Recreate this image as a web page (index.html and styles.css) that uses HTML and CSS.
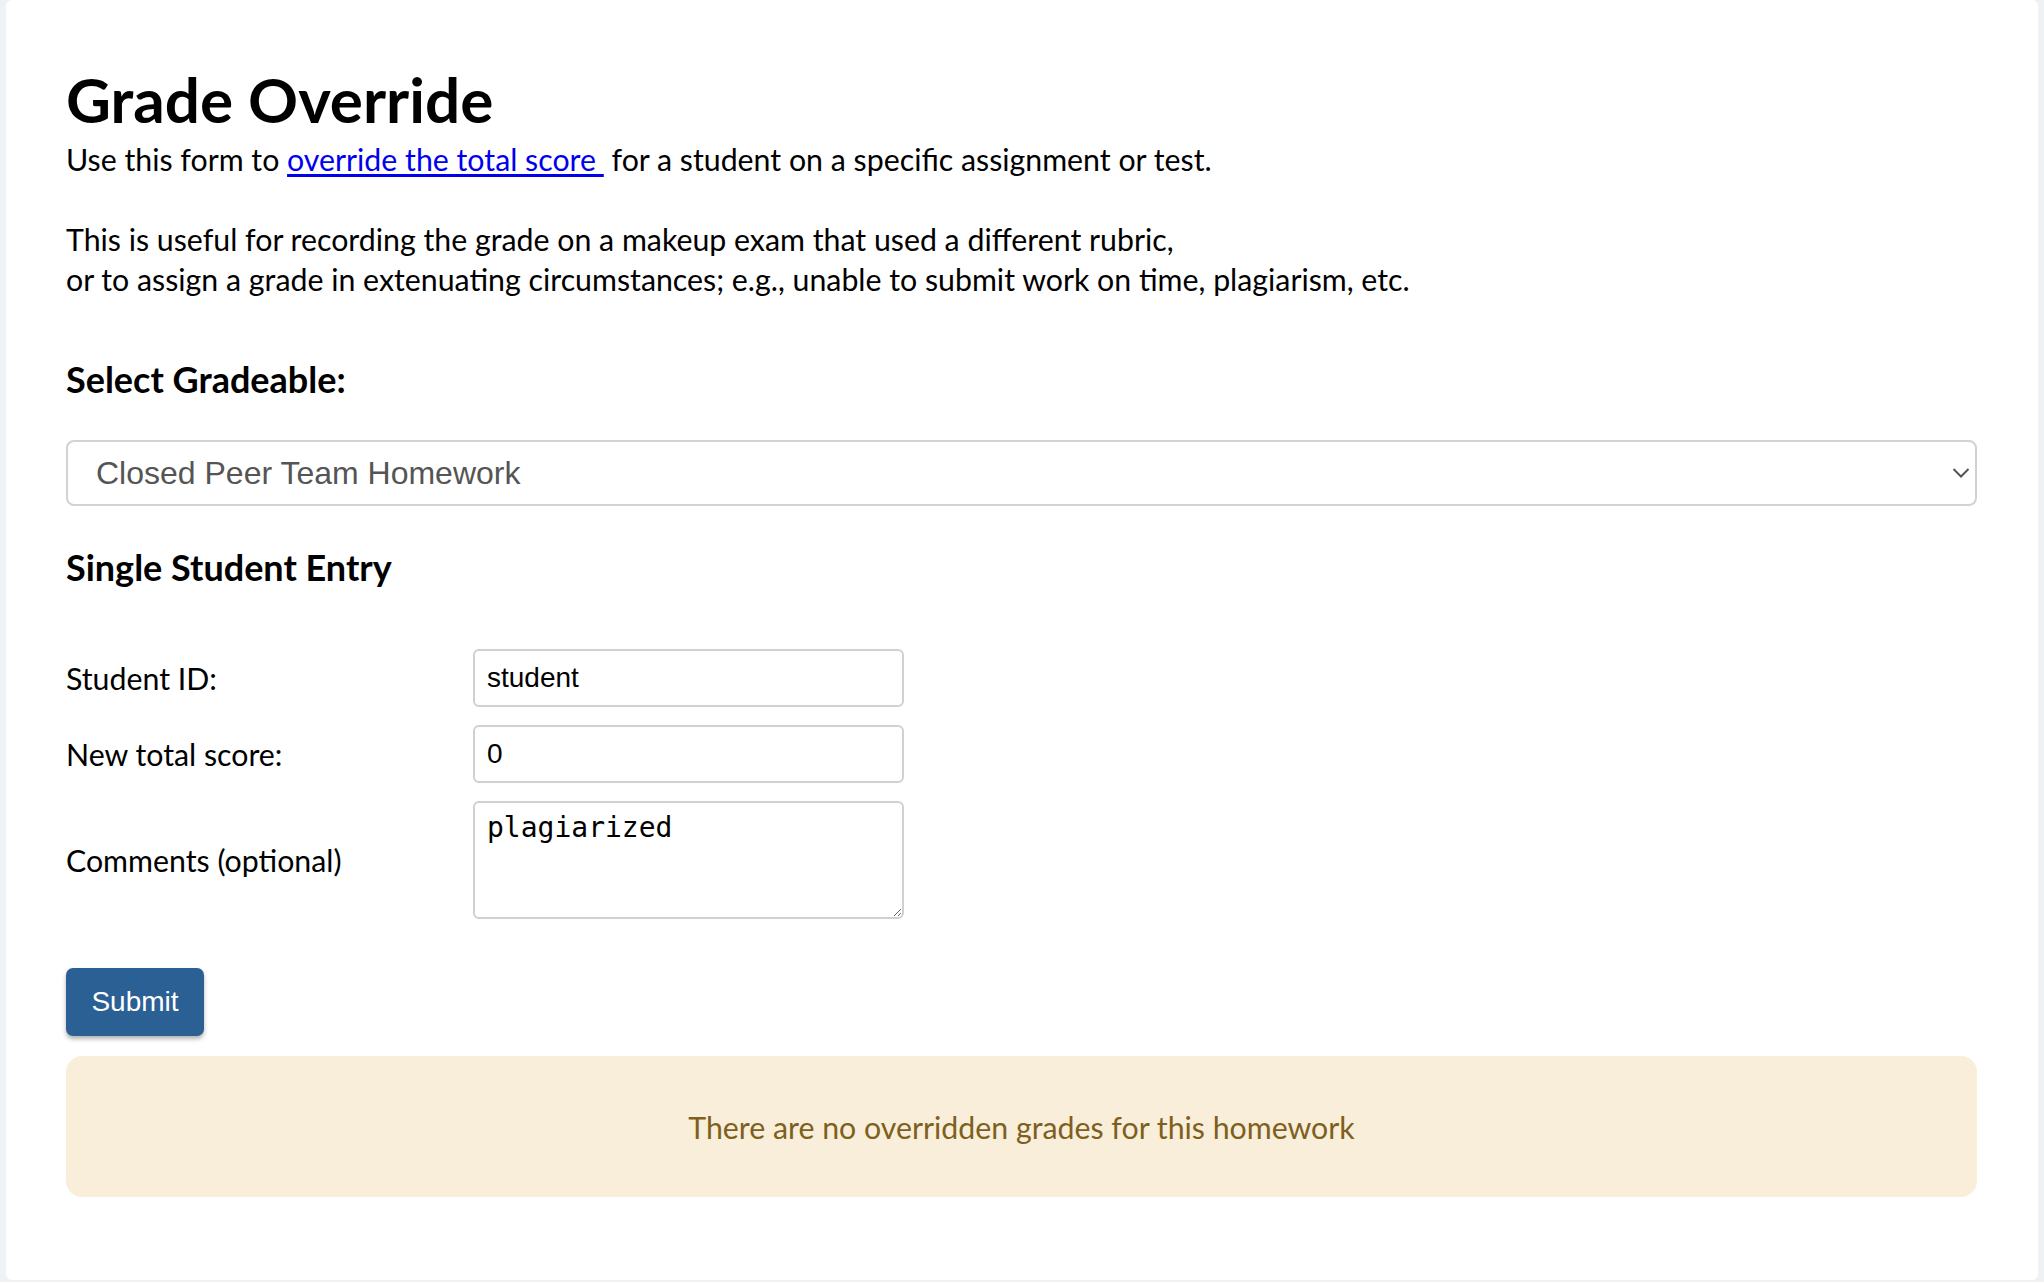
FILE: index.html
```html
<!DOCTYPE html>
<html lang="en">
<head>
<meta charset="utf-8">
<title>Grade Override</title>
<link rel="stylesheet" href="styles.css">
</head>
<body>
<main class="card">
  <h1 class="title">Grade Override</h1>
  <p class="intro">Use this form to <a href="#" class="link">override the total score&nbsp;</a> for a student on a specific assignment or test.</p>
  <p class="intro intro-gap">This is useful for recording the grade on a makeup exam that used a different rubric,<br>or to assign a grade in extenuating circumstances; e.g., unable to submit work on time, plagiarism, etc.</p>
  <h3 class="section-head">Select Gradeable:</h3>
  <div class="select-wrap">
    <select class="select">
      <option>Closed Peer Team Homework</option>
    </select>
    <svg class="chevron" width="18" height="12" viewBox="0 0 18 12"><path d="M1.5 2 L9 9.5 L16.5 2" fill="none" stroke="#555" stroke-width="2"/></svg>
  </div>
  <h3 class="section-head entry-head">Single Student Entry</h3>
  <div class="form-grid">
    <label class="label">Student ID:</label>
    <input class="field" type="text" value="student">
    <label class="label">New total score:</label>
    <input class="field" type="text" value="0">
    <label class="label">Comments (optional)</label>
    <textarea class="comments">plagiarized</textarea>
  </div>
  <button class="submit" type="button">Submit</button>
  <div class="notice">There are no overridden grades for this homework</div>
</main>
</body>
</html>
```

FILE: styles.css
```css
html, body {
  margin: 0;
  padding: 0;
}
body {
  background: #eef2f5;
  font-family: Lato, "Noto Sans", sans-serif;
  color: #000;
}
.card {
  box-sizing: border-box;
  margin-left: 6px;
  width: 2032px;
  min-height: 1280px;
  background: #fff;
  border-radius: 6px;
  padding: 68px 61px 81px 60px;
  display: flex;
  flex-direction: column;
  align-items: stretch;
}
.title {
  margin: 0;
  font-size: 62px;
  line-height: 62px;
  font-weight: 700;
}
.intro {
  margin: 9px 0 0;
  font-size: 30.3px;
  line-height: 40px;
}
.intro-gap {
  margin-top: 40px;
}
.link {
  color: #0000ee;
  text-decoration: underline;
  text-underline-offset: 3px;
}
.section-head {
  margin: 60px 0 0;
  font-size: 36px;
  line-height: 40px;
  font-weight: 700;
}
.entry-head {
  margin-top: 41px;
}
.select-wrap {
  position: relative;
  margin-top: 41px;
}
.select {
  display: block;
  box-sizing: border-box;
  width: 100%;
  height: 66px;
  -webkit-appearance: none;
  appearance: none;
  background: #fff;
  border: 2px solid #d2d2d2;
  border-radius: 8px;
  padding: 0 60px 0 28px;
  font-family: "Liberation Sans", Arial, sans-serif;
  font-size: 32px;
  color: #555;
  outline: none;
}
.chevron {
  position: absolute;
  right: 7px;
  top: 27px;
}
.form-grid {
  margin-top: 62px;
  display: grid;
  grid-template-columns: 407px 431px;
  row-gap: 18px;
  align-items: center;
}
.label {
  font-size: 30.3px;
  line-height: 40px;
}
.field {
  box-sizing: border-box;
  width: 431px;
  height: 58px;
  border: 2px solid #d0d0d0;
  border-radius: 6px;
  padding: 0 12px;
  font-family: "Liberation Sans", Arial, sans-serif;
  font-size: 28px;
  color: #000;
  outline: none;
}
.comments {
  box-sizing: border-box;
  width: 431px;
  height: 118px;
  border: 2px solid #d0d0d0;
  border-radius: 6px;
  padding: 8px 12px;
  font-family: "DejaVu Sans Mono", monospace;
  font-size: 28px;
  line-height: 1.2;
  color: #000;
  outline: none;
  resize: both;
}
.submit {
  align-self: flex-start;
  margin-top: 49px;
  box-sizing: border-box;
  width: 138px;
  height: 68px;
  border: none;
  border-radius: 7px;
  background: #2b6094;
  color: #fff;
  font-family: "Liberation Sans", Arial, sans-serif;
  font-size: 28px;
  box-shadow: 0 3px 4px rgba(0, 0, 0, 0.3);
  padding: 0;
}
.notice {
  margin-top: 20px;
  box-sizing: border-box;
  height: 141px;
  display: flex;
  align-items: center;
  justify-content: center;
  background: #f8eed9;
  color: #7d6020;
  border-radius: 16px;
  font-size: 30.3px;
  line-height: 40px;
}
```
